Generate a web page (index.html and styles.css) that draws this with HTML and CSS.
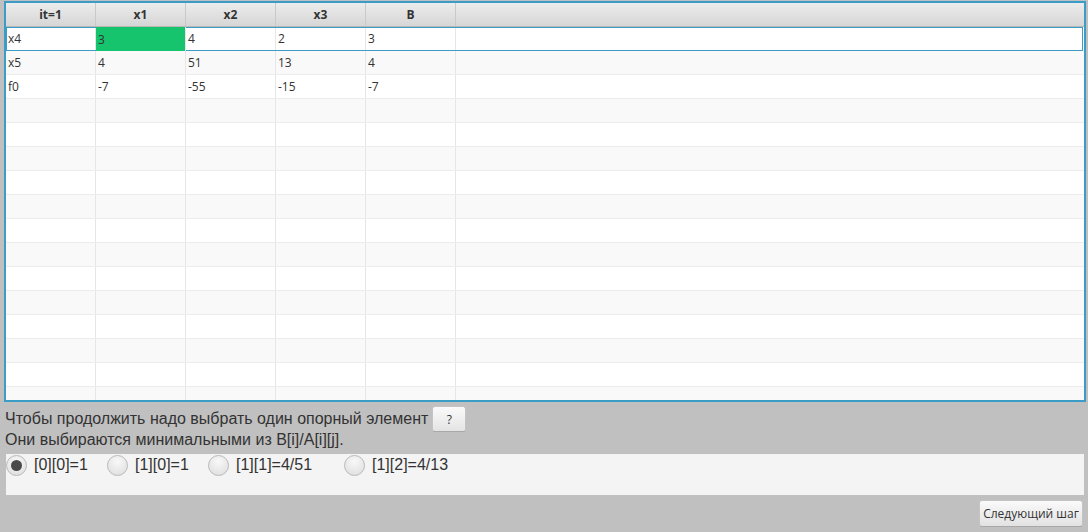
FILE: index.html
```html
<!DOCTYPE html>
<html lang="ru">
<head>
<meta charset="utf-8">
<link rel="stylesheet" href="styles.css">
</head>
<body>
<div class="app">
  <div class="table">
    <div class="header">
      <div class="hcell">it=1</div>
      <div class="hcell">x1</div>
      <div class="hcell">x2</div>
      <div class="hcell">x3</div>
      <div class="hcell">B</div>
      <div class="hfill"></div>
    </div>
    <div class="rows">
      <div class="row odd focused">
        <div class="cell">x4</div><div class="cell pivot">3</div><div class="cell">4</div><div class="cell">2</div><div class="cell">3</div><div class="fill"></div>
      </div>
      <div class="row even">
        <div class="cell">x5</div><div class="cell">4</div><div class="cell">51</div><div class="cell">13</div><div class="cell">4</div><div class="fill"></div>
      </div>
      <div class="row odd">
        <div class="cell">f0</div><div class="cell">-7</div><div class="cell">-55</div><div class="cell">-15</div><div class="cell">-7</div><div class="fill"></div>
      </div>
      <div class="row even"><div class="cell"></div><div class="cell"></div><div class="cell"></div><div class="cell"></div><div class="cell"></div><div class="fill"></div></div>
      <div class="row odd"><div class="cell"></div><div class="cell"></div><div class="cell"></div><div class="cell"></div><div class="cell"></div><div class="fill"></div></div>
      <div class="row even"><div class="cell"></div><div class="cell"></div><div class="cell"></div><div class="cell"></div><div class="cell"></div><div class="fill"></div></div>
      <div class="row odd"><div class="cell"></div><div class="cell"></div><div class="cell"></div><div class="cell"></div><div class="cell"></div><div class="fill"></div></div>
      <div class="row even"><div class="cell"></div><div class="cell"></div><div class="cell"></div><div class="cell"></div><div class="cell"></div><div class="fill"></div></div>
      <div class="row odd"><div class="cell"></div><div class="cell"></div><div class="cell"></div><div class="cell"></div><div class="cell"></div><div class="fill"></div></div>
      <div class="row even"><div class="cell"></div><div class="cell"></div><div class="cell"></div><div class="cell"></div><div class="cell"></div><div class="fill"></div></div>
      <div class="row odd"><div class="cell"></div><div class="cell"></div><div class="cell"></div><div class="cell"></div><div class="cell"></div><div class="fill"></div></div>
      <div class="row even"><div class="cell"></div><div class="cell"></div><div class="cell"></div><div class="cell"></div><div class="cell"></div><div class="fill"></div></div>
      <div class="row odd"><div class="cell"></div><div class="cell"></div><div class="cell"></div><div class="cell"></div><div class="cell"></div><div class="fill"></div></div>
      <div class="row even"><div class="cell"></div><div class="cell"></div><div class="cell"></div><div class="cell"></div><div class="cell"></div><div class="fill"></div></div>
      <div class="row odd"><div class="cell"></div><div class="cell"></div><div class="cell"></div><div class="cell"></div><div class="cell"></div><div class="fill"></div></div>
      <div class="row even"><div class="cell"></div><div class="cell"></div><div class="cell"></div><div class="cell"></div><div class="cell"></div><div class="fill"></div></div>
    </div>
  </div>

  <div class="info">
    <div class="line1">
      <span>Чтобы продолжить надо выбрать один опорный элемент</span>
      <button class="help">?</button>
    </div>
    <div class="line2">Они выбираются минимальными из B[i]/A[i][j].</div>
  </div>

  <div class="choices">
    <label class="radio w101"><span class="dot checked"></span><span class="rlabel">[0][0]=1</span></label>
    <label class="radio w101"><span class="dot"></span><span class="rlabel">[1][0]=1</span></label>
    <label class="radio w136"><span class="dot"></span><span class="rlabel">[1][1]=4/51</span></label>
    <label class="radio"><span class="dot"></span><span class="rlabel">[1][2]=4/13</span></label>
  </div>

  <div class="footer">
    <button class="next">Следующий шаг</button>
  </div>
</div>
</body>
</html>
```

FILE: styles.css
```css
html, body {
  margin: 0;
  padding: 0;
}
body {
  background: #c0c0c0;
  width: 1088px;
  height: 532px;
  overflow: hidden;
  font-family: "Liberation Sans", Arial, sans-serif;
  color: #333;
}
.app {
  display: flex;
  flex-direction: column;
  padding: 1px 2px 0 4px;
}
.table {
  height: 397px;
  border: 2px solid #3b9cc6;
  background: #fff;
  overflow: hidden;
  display: flex;
  flex-direction: column;
  font-family: "Open Sans", "Noto Sans", sans-serif;
  font-size: 12px;
}
.header {
  display: flex;
  height: 23px;
  flex: 0 0 23px;
  background: linear-gradient(#ececec, #d6d6d6);
  border-bottom: 1px solid #b8b8b8;
}
.hcell {
  width: 89px;
  flex: 0 0 89px;
  border-right: 1px solid #c9c9c9;
  display: flex;
  align-items: center;
  justify-content: center;
  font-weight: bold;
  color: #333;
}
.hfill {
  flex: 1;
}
.rows {
  flex: 1;
  overflow: hidden;
}
.row {
  display: flex;
  height: 23px;
  border-bottom: 1px solid #ececec;
  position: relative;
}
.row.odd { background: #fff; }
.row.even { background: #f9f9f9; }
.row.focused::after {
  content: "";
  position: absolute;
  left: 0;
  top: 0;
  right: 1px;
  bottom: -1px;
  border: 1px solid #3b9cc6;
  pointer-events: none;
}
.cell {
  width: 87px;
  flex: 0 0 87px;
  padding-left: 2px;
  border-right: 1px solid #e6e6e6;
  display: flex;
  align-items: center;
  color: #333;
}
.cell.pivot {
  background: #15c46c;
  position: relative;
  z-index: 1;
  height: 24px;
}
.fill {
  flex: 1;
}
.info {
  padding: 4px 0 0 1px;
  font-size: 16px;
  color: #333;
}
.line1 {
  display: flex;
  align-items: center;
  height: 26px;
}
.line2 {
  height: 20px;
  line-height: 16px;
}
.help {
  margin-left: 4px;
  width: 34px;
  height: 26px;
  border: 1px solid #c4c4c4;
  border-bottom-color: #a8a8a8;
  border-radius: 3px;
  background: linear-gradient(#fafafa, #e4e4e4);
  font-family: "Open Sans", "Noto Sans", sans-serif;
  font-size: 12px;
  color: #333;
  padding: 0;
}
.choices {
  margin-top: 2px;
  margin-left: 2px;
  margin-right: 2px;
  height: 41px;
  background: #f4f4f4;
  display: flex;
  align-items: flex-start;
  font-size: 16px;
}
.radio {
  display: flex;
  align-items: center;
  height: 22px;
}
.w101 { width: 101px; flex: 0 0 101px; }
.w136 { width: 136px; flex: 0 0 136px; }
.dot {
  width: 21px;
  height: 21px;
  box-sizing: border-box;
  border-radius: 50%;
  border: 1px solid #b8b8b8;
  background: radial-gradient(circle at 50% 30%, #f8f8f8, #dcdcdc);
  display: flex;
  align-items: center;
  justify-content: center;
}
.dot.checked::before {
  content: "";
  width: 11px;
  height: 11px;
  border-radius: 50%;
  background: #4a4a4a;
}
.rlabel {
  margin-left: 7px;
  color: #333;
}
.footer {
  display: flex;
  justify-content: flex-end;
  margin-top: 5px;
  padding-right: 3px;
}
.next {
  width: 104px;
  height: 27px;
  border: 1px solid #c4c4c4;
  border-bottom-color: #a8a8a8;
  border-radius: 3px;
  background: linear-gradient(#fafafa, #e2e2e2);
  font-family: "Open Sans", "Noto Sans", sans-serif;
  font-size: 12px;
  color: #333;
  padding: 0;
}
```
